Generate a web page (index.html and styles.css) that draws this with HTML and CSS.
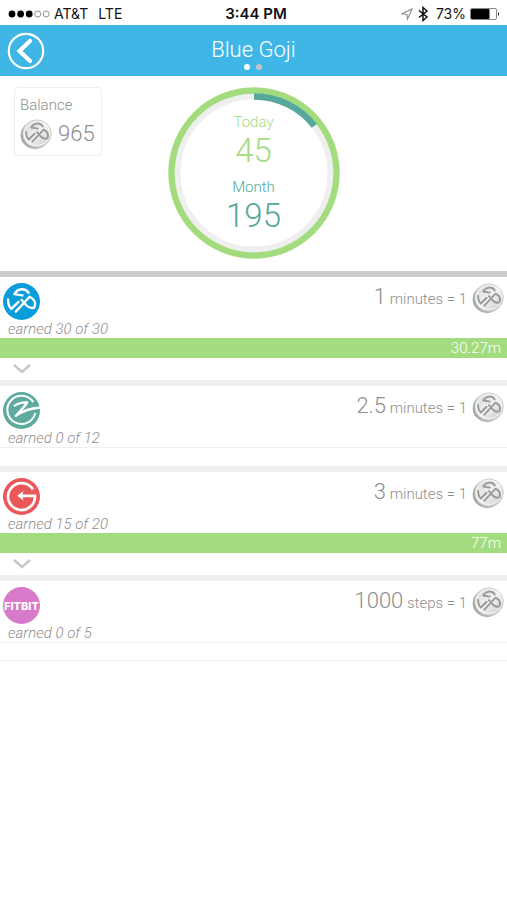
FILE: index.html
```html
<!DOCTYPE html>
<html lang="en">
<head>
  <meta charset="UTF-8">
  <meta name="viewport" content="width=device-width, initial-scale=1">
  <title>Blue Goji</title>
  <link rel="stylesheet" href="styles.css">
</head>
<body>

  <!-- shared icons -->
  <svg class="defs" width="0" height="0" aria-hidden="true">
    <defs>
      <linearGradient id="silver" x1="0" y1="0" x2="1" y2="1">
        <stop offset="0" stop-color="#d2d4d4"/>
        <stop offset="0.5" stop-color="#f0f1f1"/>
        <stop offset="1" stop-color="#c4c6c6"/>
      </linearGradient>
      <linearGradient id="edge" x1="0" y1="0" x2="1" y2="0">
        <stop offset="0" stop-color="#a2a4a4"/>
        <stop offset="1" stop-color="#cfd0d0"/>
      </linearGradient>
    </defs>
    <symbol id="mark" viewBox="0 0 110 110">
      <g fill="none" stroke="currentColor" stroke-width="7" stroke-linecap="round" stroke-linejoin="round">
        <path d="M34 33 C44 15 66 14 76 29 M34 33 L58 37"/>
        <path d="M38 85 L79 41 C95 49 99 60 93 73 C83 77 77 74 70 67 L55 50"/>
        <path d="M15 49 C15 62 18 71 25 77 L46 56"/>
      </g>
    </symbol>
    <symbol id="coin" viewBox="0 0 96 92">
      <ellipse cx="46" cy="48" rx="44" ry="42" fill="url(#edge)"/>
      <ellipse cx="51" cy="43" rx="43" ry="41" fill="url(#silver)" stroke="#c3c5c5" stroke-width="2"/>
      <ellipse cx="51" cy="43" rx="38" ry="36" fill="none" stroke="#f8f8f8" stroke-width="3"/>
      <use href="#mark" x="6" y="-2" width="90" height="90" color="#999b9b"/>
    </symbol>
    <symbol id="chevron" viewBox="0 0 18 10">
      <path d="M1 1 L9 8 L17 1" fill="none" stroke="#c6c6c9" stroke-width="2.400"/>
    </symbol>
  </svg>

  <div class="status">
    <div class="carrier">
      <svg width="42" height="10" viewBox="0 0 42 10" aria-hidden="true">
        <circle cx="4" cy="5" r="3.4"/>
        <circle cx="12.6" cy="5" r="3.4"/>
        <circle cx="21.2" cy="5" r="3.4"/>
        <g fill="none" stroke="#777" stroke-width="0.8">
          <circle cx="29.8" cy="5" r="3"/>
          <circle cx="38.2" cy="5" r="3"/>
        </g>
      </svg>
      <span>AT&amp;T</span>
      <span class="network">LTE</span>
    </div>
    <strong class="time">3:44 PM</strong>
    <div class="indicators">
      <svg width="14" height="14" viewBox="0 0 14 14" aria-hidden="true">
        <path d="M1.5 7 L12 2 L7.5 12 L6.8 7.3 Z" fill="none" stroke="#8a8a8a" stroke-width="1.1"/>
      </svg>
      <svg class="bluetooth" width="10" height="16" viewBox="0 0 10 16" aria-hidden="true">
        <path d="M1 4.5 L9 11 L5 14.5 V1.5 L9 5 L1 11.5" fill="none" stroke="#111" stroke-width="1.5"/>
      </svg>
      <span>73%</span>
      <svg width="30" height="12" viewBox="0 0 30 12" aria-hidden="true">
        <rect x="0.5" y="0.5" width="26" height="11" rx="1.5" fill="#fff" stroke="#888"/>
        <rect x="1" y="1" width="18.5" height="10" rx="1"/>
        <path d="M28 4 Q30 6 28 8 Z"/>
      </svg>
    </div>
  </div>

  <header class="topbar">
    <button class="back" type="button" aria-label="Back">
      <svg width="38" height="38" viewBox="0 0 38 38" aria-hidden="true">
        <circle cx="19" cy="19" r="17.2" fill="none" stroke="#fff" stroke-width="2.2"/>
        <path d="M23 9 L12.500 19 L23 29" fill="none" stroke="#fff" stroke-width="4.200" stroke-linecap="round"/>
      </svg>
    </button>
    <div class="heading">
      <h1>Blue Goji</h1>
      <div class="pages"><i class="page current"></i><i class="page"></i></div>
    </div>
  </header>

  <main>
    <section class="summary">
      <div class="balance">
        <div class="label">Balance</div>
        <div class="amount">
          <svg class="coin" aria-hidden="true"><use href="#coin"/></svg>
          <span>965</span>
        </div>
      </div>
      <div class="dial">
        <svg class="ring" viewBox="0 0 172 172" aria-hidden="true">
          <circle cx="86" cy="86" r="76.500" fill="none" stroke="#efefef" stroke-width="6"/>
          <circle cx="86" cy="86" r="82.500" fill="none" stroke="#a3dc7f" stroke-width="6.400"/>
          <path d="M86 9.500 A76.500 76.500 0 0 1 146.300 38.900" fill="none" stroke="#55a89b" stroke-width="6.400"/>
        </svg>
        <div class="stats">
          <div class="today"><span>Today</span><b>45</b></div>
          <div class="month"><span>Month</span><b>195</b></div>
        </div>
      </div>
    </section>

    <section class="source">
      <div class="info">
        <div class="rate">
          <svg class="logo goji" viewBox="0 0 110 110" aria-hidden="true">
            <circle cx="55" cy="55" r="55" fill="#0b9cdb"/>
            <use href="#mark" width="110" height="110"/>
          </svg>
          <p><b>1</b> minutes = 1</p>
          <svg class="coin" aria-hidden="true"><use href="#coin"/></svg>
        </div>
        <p class="earned">earned 30 of 30</p>
      </div>
      <div class="bar">30.27m</div>
      <button class="more" type="button" aria-label="Show details"><svg width="18" height="10" aria-hidden="true"><use href="#chevron"/></svg></button>
    </section>

    <section class="source">
      <div class="info">
        <div class="rate">
          <svg class="logo" viewBox="0 0 110 110" aria-hidden="true">
            <circle cx="55" cy="55" r="55" fill="#5eaa9e"/>
            <g fill="none" stroke="#fff" stroke-linejoin="round">
              <path d="M90 30 A42 42 0 1 0 96 62" stroke-width="6"/>
              <path d="M32 42 Q50 30 72 31 Q66 42 38 71 Q66 50 110 46" stroke-width="7"/>
            </g>
          </svg>
          <p><b>2.5</b> minutes = 1</p>
          <svg class="coin" aria-hidden="true"><use href="#coin"/></svg>
        </div>
        <p class="earned">earned 0 of 12</p>
      </div>
      <div class="blank"></div>
    </section>

    <section class="source">
      <div class="info">
        <div class="rate">
          <svg class="logo" viewBox="0 0 110 110" aria-hidden="true">
            <circle cx="55" cy="55" r="55" fill="#ea5759"/>
            <path d="M89 34 A40 40 0 1 0 95 53 H56" fill="none" stroke="#fff" stroke-width="8"/>
            <path d="M42 53 L61 39 L57 53 L61 67 Z" fill="#fff"/>
          </svg>
          <p><b>3</b> minutes = 1</p>
          <svg class="coin" aria-hidden="true"><use href="#coin"/></svg>
        </div>
        <p class="earned">earned 15 of 20</p>
      </div>
      <div class="bar">77m</div>
      <button class="more" type="button" aria-label="Show details"><svg width="18" height="10" aria-hidden="true"><use href="#chevron"/></svg></button>
    </section>

    <section class="source">
      <div class="info">
        <div class="rate">
          <span class="logo fitbit">FITBIT</span>
          <p><b>1000</b> steps = 1</p>
          <svg class="coin" aria-hidden="true"><use href="#coin"/></svg>
        </div>
        <p class="earned">earned 0 of 5</p>
      </div>
      <div class="blank"></div>
    </section>
  </main>

</body>
</html>
```
FILE: styles.css
```css
* { box-sizing: border-box; }
body { margin: 0; background: #fff; color: #8e8e8e; font-family: Roboto, sans-serif; font-weight: 300; font-size: 15px; }
h1, p { margin: 0; }
button { padding: 0; border: 0; background: none; cursor: pointer; }
svg { display: block; flex: none; }
.defs { position: absolute; }

/* phone status bar */
.status { display: grid; grid-template-columns: 1fr auto 1fr; align-items: center; height: 25px; padding: 2px 7px 0 8px; color: #111; font-family: Inter, sans-serif; font-size: 14px; font-weight: 400; }
.carrier { display: flex; align-items: center; gap: 4px; }
.network { margin-left: 6px; }
.time { padding-left: 4px; font-size: 15px; font-weight: 600; }
.indicators { display: flex; align-items: center; justify-content: flex-end; gap: 4px; }
.bluetooth { margin-right: 4px; }

.topbar { display: grid; grid-template-columns: 1fr auto 1fr; height: 51px; padding: 0 7px; background: #3fb6e6; color: #fff; }
.back { justify-self: start; align-self: center; }
.heading { padding-top: 11px; text-align: center; }
h1 { font-size: 22px; line-height: 28px; font-weight: 300; }
.pages { display: flex; justify-content: center; gap: 6px; }
.page { width: 6px; height: 6px; border-radius: 50%; background: #c3c3c8; }
.current { background: #fff; }

.summary { display: grid; grid-template-columns: 1fr auto 1fr; align-items: start; padding: 11px 14px 12px; }
.balance { justify-self: start; width: 88px; height: 69px; padding: 8px 5px; border: 1px solid #eee; border-radius: 4px; }
.label { line-height: 18px; }
.amount { display: flex; align-items: center; gap: 6px; margin-top: 4px; font-size: 22px; line-height: 32px; }
.coin { width: 32px; height: 31px; }
.dial { display: grid; width: 172px; }
.ring, .stats { grid-area: 1 / 1; }
.stats { padding-top: 25px; text-align: center; }
.stats span, .stats b { display: block; font-weight: 300; }
.stats span { line-height: 20px; }
.stats b { font-size: 33px; line-height: 38px; }
.today { color: #a3dc7f; }
.month { margin-top: 7px; color: #55a89b; }

/* point sources */
.source { border-top: 6px solid #efefef; }
.summary + .source { border-top-color: #ccc; }
.info { height: 61px; }
.rate { display: flex; align-items: flex-start; padding: 6px 3px 0 3px; }
.rate p { flex: 1; margin-right: 5px; text-align: right; line-height: 28px; }
.rate b { font-size: 22px; font-weight: 300; }
.logo { width: 37px; height: 37px; }
.goji { color: #fff; }
.fitbit { display: flex; align-items: center; justify-content: center; border-radius: 50%; background: #d879c9; color: #fff; font-family: Inter, sans-serif; font-size: 11px; font-weight: 800; }
.earned { padding-left: 8px; line-height: 18px; font-style: italic; }
.bar { height: 20px; padding-right: 6px; background: #a3dc7f; color: #fff; line-height: 20px; text-align: right; }
.more { display: block; width: 100%; height: 22px; padding: 6px 13px; }
.blank { height: 19px; border-top: 1px solid #efefef; }
.source:last-child .blank { border-bottom: 1px solid #efefef; }
```
